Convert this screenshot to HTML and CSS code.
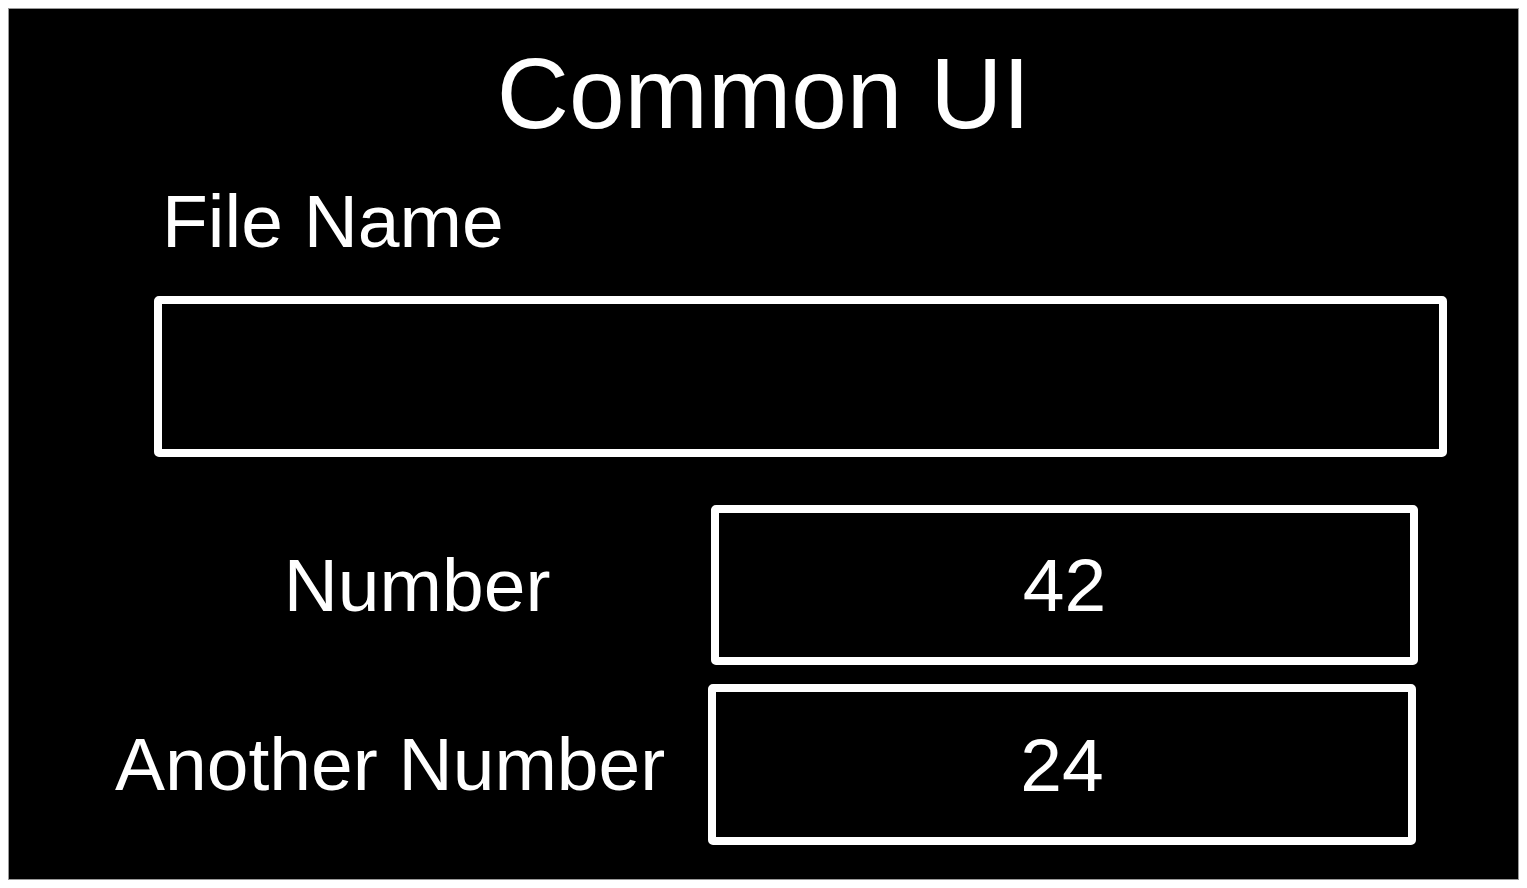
FILE: index.html
```html
<!DOCTYPE html>
<html lang="en">
  <head>
    <meta charset="UTF-8" />
    <meta name="viewport" content="width=device-width, initial-scale=1.0" />
    <title>Common UI</title>
    <link rel="stylesheet" href="styles.css">
  </head>
  <body>
    <div class="panel">
      <h1 class="title">Common UI</h1>
      <form class="common-form" action="" method="post">
        <label class="file-label" for="file">File Name</label>
        <input class="file-input" type="text" id="file" name="file" />
        <div class="row row-number">
          <label class="row-label" for="number">Number</label>
          <input class="num-input" type="text" id="number" name="number" value="42" />
        </div>
        <div class="row row-another">
          <label class="row-label row-label-wide" for="another">Another Number</label>
          <input class="num-input" type="text" id="another" name="another" value="24" />
        </div>
      </form>
    </div>
  </body>
</html>
```

FILE: styles.css
```css
body {
  margin: 8px;
  background-color: #fff;
  font-family: "Liberation Sans", Arial, sans-serif;
}

.panel {
  background-color: #000;
  color: #fff;
  border: 1px solid #999;
  height: 872px;
  box-sizing: border-box;
  padding-top: 27px;
}

.title {
  margin: 0;
  font-size: 100px;
  font-weight: normal;
  line-height: 115px;
  text-align: center;
}

.common-form {
  display: flex;
  flex-direction: column;
  align-items: flex-start;
  padding-left: 145px;
}

.file-label {
  margin-top: 28px;
  padding-left: 8px;
  font-size: 75px;
  line-height: 85px;
}

.file-input {
  margin-top: 32px;
  width: 1293px;
  height: 161px;
  box-sizing: border-box;
  background-color: #000;
  border: 8px solid #fff;
  border-radius: 5px;
  outline: none;
  color: #fff;
  font-family: inherit;
  font-size: 75px;
  padding: 0 10px;
}

.row {
  display: flex;
  align-items: center;
}

.row-number {
  margin-top: 48px;
  margin-left: -37px;
}

.row-another {
  margin-top: 19px;
  margin-left: -39px;
}

.row-label {
  width: 594px;
  box-sizing: border-box;
  padding-left: 6px;
  font-size: 75px;
  line-height: 85px;
  text-align: center;
}

.row-label-wide {
  width: 593px;
  padding-left: 0;
  text-align: left;
}

.num-input {
  width: 707px;
  height: 160px;
  box-sizing: border-box;
  background-color: #000;
  border: 8px solid #fff;
  border-radius: 5px;
  outline: none;
  color: #fff;
  font-family: inherit;
  font-size: 75px;
  text-align: center;
  padding: 0;
}

.row-another .num-input {
  width: 708px;
  height: 161px;
}
```
